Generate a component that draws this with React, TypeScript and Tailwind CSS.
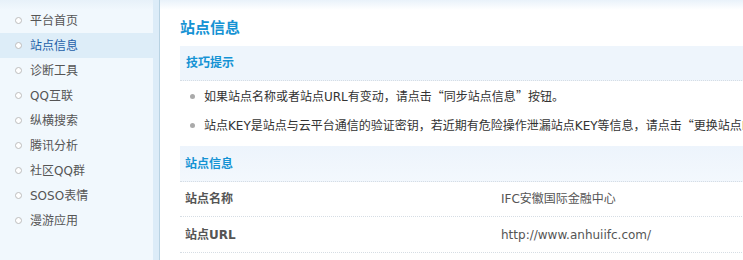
import React from "react";

const items = ["平台首页", "站点信息", "诊断工具", "QQ互联", "纵横搜索", "腾讯分析", "社区QQ群", "SOSO表情", "漫游应用"];

function Q({ children }: { children: React.ReactNode }) {
  return <span className="font-['Noto_Sans_CJK_SC',sans-serif]">{children}</span>;
}

export default function App() {
  return (
    <div
      className="flex h-[260px] w-[743px] overflow-hidden bg-white text-[12px] text-[#333]"
      style={{ fontFamily: '"DejaVu Sans", "Noto Sans CJK SC", sans-serif' }}
    >
      <div className="flex w-[160px] shrink-0">
        <div className="w-[153px] bg-[#f1f8fd] bg-gradient-to-b from-[#e7f1f9] to-[#f1f8fd] bg-[length:100%_10px] bg-no-repeat pt-[8px]">
          {items.map((t, i) => (
            <div
              key={t}
              className={
                "flex h-[25px] items-center pl-[15px] " +
                (i === 1 ? "bg-[#ddedf8] text-[#1d5fa8]" : "text-[#555]")
              }
            >
              <span className="mr-[8px] h-[7px] w-[7px] rounded-full border border-[#bdbdbd] bg-white" />
              <span>{t}</span>
            </div>
          ))}
        </div>
        <div className="w-[7px] border-r border-[#b8d2e2] bg-[#dcecf8]" />
      </div>
      <div className="relative flex-1 bg-gradient-to-b from-[#e9f2fa] to-white bg-[length:100%_10px] bg-no-repeat pl-[20px]">
        <div className="flex h-[46px] items-center pt-[10px] text-[15px] font-bold text-[#1593d4]">站点信息</div>
        <div className="w-[700px]">
          <div className="flex h-[35px] items-center border-b border-dotted border-[#d6dde4] bg-[#eef5fc] pl-[6px] font-bold text-[#1593d4]">
            技巧提示
          </div>
          <ul className="whitespace-nowrap pb-[6px] pt-[1px]">
            <li className="flex h-[29px] items-center pl-[10px]">
              <span className="mr-[9px] h-[5px] w-[5px] rounded-full bg-[#aaa]" />
              <span>
                如果站点名称或者站点URL有变动<Q>，</Q>请点击<Q>“</Q>同步站点信息<Q>”</Q>按钮。
              </span>
            </li>
            <li className="flex h-[29px] items-center pl-[10px]">
              <span className="mr-[9px] h-[5px] w-[5px] rounded-full bg-[#aaa]" />
              <span>
                站点KEY是站点与云平台通信的验证密钥<Q>，</Q>若近期有危险操作泄漏站点KEY等信息<Q>，</Q>请点击<Q>“</Q>更换站点KEY<Q>”</Q>按钮。
              </span>
            </li>
          </ul>
          <div className="flex h-[36px] items-center border-b border-dotted border-[#d6dde4] bg-gradient-to-b from-[#edf4fc] to-[#f3f8fd] pl-[5px] font-bold text-[#1593d4]">
            站点信息
          </div>
          <div className="flex h-[35px] items-center border-b border-dotted border-[#d6dde4] pl-[5px]">
            <div className="w-[316px] font-bold text-[#555]">站点名称</div>
            <div className="text-[#555]">IFC安徽国际金融中心</div>
          </div>
          <div className="flex h-[36px] items-center border-b border-dotted border-[#d6dde4] pl-[5px]">
            <div className="w-[316px] font-bold text-[#555]">站点URL</div>
            <div className="text-[#555]">http://www.anhuiifc.com/</div>
          </div>
        </div>
      </div>
    </div>
  );
}
